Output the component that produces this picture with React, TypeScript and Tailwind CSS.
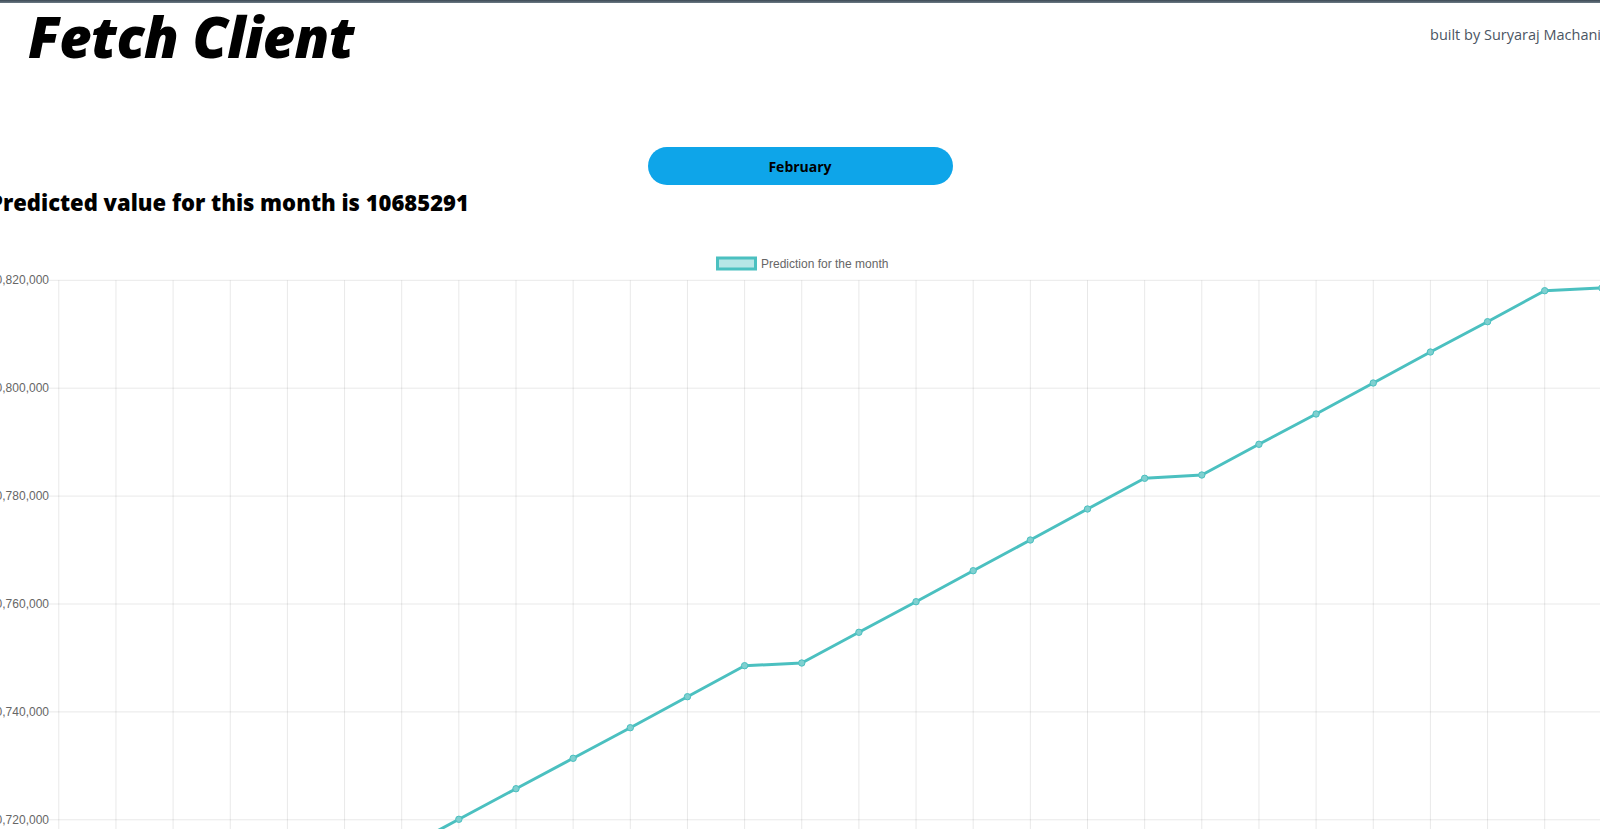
const gridX = Array.from({ length: 28 }, (_, k) => 58.8 + 57.15 * k);

const ticks = [
  { label: "10,820,000", y: 279.3 },
  { label: "10,800,000", y: 387.2 },
  { label: "10,780,000", y: 495.1 },
  { label: "10,760,000", y: 603 },
  { label: "10,740,000", y: 710.9 },
  { label: "10,720,000", y: 818.8 },
];

// y positions (page px) of the predicted values, one per month
const values: [number, number][] = [
  [5, 851], [6, 849], [7, 818.3], [8, 787.7], [9, 757.3], [10, 726.7], [11, 695.7],
  [12, 664.7], [13, 662], [14, 631.3], [15, 600.7], [16, 569.7], [17, 539],
  [18, 508], [19, 477.3], [20, 474], [21, 443.3], [22, 413], [23, 382],
  [24, 351], [25, 320.7], [26, 289.7], [27, 287],
];

function PredictionChart() {
  const pts = values.map(([k, y]) => [gridX[k], y] as const);
  const line = pts.map(([x, y]) => `${x.toFixed(1)},${y}`).join(" ");

  return (
    <svg
      width={1600}
      height={589}
      viewBox="0 240 1600 589"
      className="block shrink-0"
      style={{ fontFamily: '"Liberation Sans", Arial, sans-serif' }}
    >
      {/* legend */}
      <rect x={717.5} y={257} width={38} height={11} fill="rgba(75,192,192,0.4)" stroke="#4bc0c0" strokeWidth={3} />
      <text x={761} y={266.5} fontSize={12} fill="#666">
        Prediction for the month
      </text>

      {/* grid */}
      {gridX.map((x) => (
        <line key={x} x1={x} x2={x} y1={279.3} y2={829} stroke="rgba(0,0,0,0.09)" strokeWidth={1} />
      ))}
      {ticks.map((t) => (
        <g key={t.label}>
          <line x1={49} x2={1600} y1={t.y} y2={t.y} stroke="rgba(0,0,0,0.09)" strokeWidth={1} />
          <text x={49} y={t.y + 4} fontSize={12} fill="#666" textAnchor="end">
            {t.label}
          </text>
        </g>
      ))}

      {/* dataset */}
      <polyline points={line} fill="none" stroke="#4bc0c0" strokeWidth={3} strokeLinejoin="round" />
      {pts.map(([x, y]) => (
        <circle key={x} cx={x} cy={y} r={3.2} fill="#7fd0d0" stroke="#4bc0c0" strokeWidth={1} />
      ))}
    </svg>
  );
}

export default function App() {
  return (
    <div className="w-[1600px] h-[829px] overflow-hidden bg-white relative">
      <div className="h-[3px] bg-gradient-to-b from-[#3d4a55] to-[#6b7a85]" />

      {/* Header */}
      <header className="flex items-start justify-between h-[78px]">
        <h1
          className="pl-[28px] text-[56px] leading-[66px] font-extrabold italic text-black tracking-[-0.5px]"
          style={{ fontFamily: '"Open Sans", "Noto Sans", sans-serif' }}
        >
          Fetch Client
        </h1>
        <p
          className="mt-[21px] -mr-[1px] text-[14.5px] text-[#4b5563] whitespace-nowrap"
          style={{ fontFamily: '"Open Sans", "Noto Sans", sans-serif' }}
        >
          built by Suryaraj Machani
        </p>
      </header>

      <div className="flex justify-center mt-[66px]">
        <button
          className="w-[305px] h-[38px] rounded-full bg-[#0ea5e9] text-black font-bold text-[14px]"
          style={{ fontFamily: '"Open Sans", "Noto Sans", sans-serif' }}
        >
          February
        </button>
      </div>

      <h2
        className="-ml-[11px] mt-[2px] text-[22px] leading-[30px] font-extrabold text-black whitespace-nowrap"
        style={{ fontFamily: '"Open Sans", "Noto Sans", sans-serif' }}
      >
        Predicted value for this month is 10685291
      </h2>

      <div className="mt-[24px]">
        <PredictionChart />
      </div>
    </div>
  );
}
